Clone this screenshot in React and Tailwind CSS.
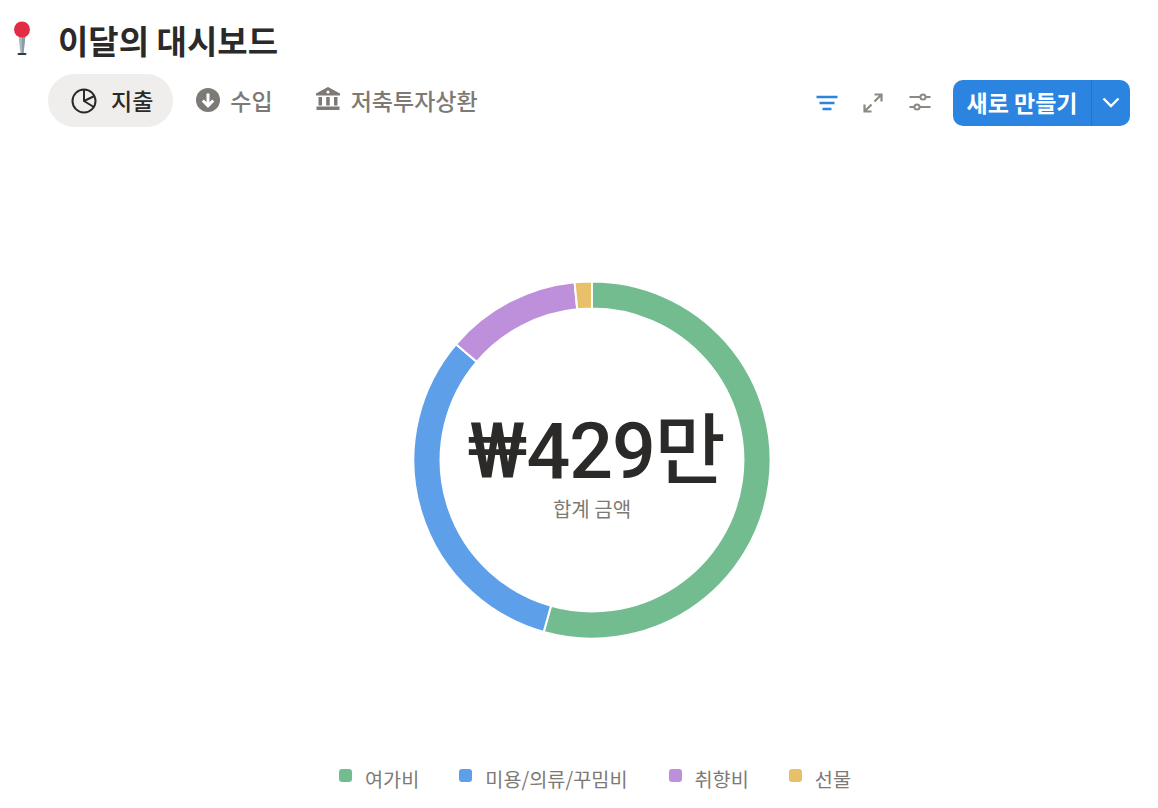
import React from 'react';

const font = { fontFamily: '"Noto Sans CJK KR", "Noto Sans", sans-serif' };
const totalFont = { fontFamily: 'Roboto, "Noto Sans CJK KR", sans-serif' };

const CX = 178;
const CY = 178;
const OUTER = 178.6;
const INNER = 151.4;

const segments = [
  { color: '#72bc90', from: 0, to: 195.7 },
  { color: '#5e9fe9', from: 195.7, to: 310.4 },
  { color: '#be8fdb', from: 310.4, to: 354.4 },
  { color: '#e8c069', from: 354.4, to: 360 },
];

const legend = [
  { label: '여가비', color: '#72bc90' },
  { label: '미용/의류/꾸밈비', color: '#5e9fe9' },
  { label: '취향비', color: '#be8fdb' },
  { label: '선물', color: '#e8c069' },
];

const point = (r, deg) => {
  const a = (deg * Math.PI) / 180;
  return `${(CX + r * Math.sin(a)).toFixed(2)} ${(CY - r * Math.cos(a)).toFixed(2)}`;
};

const arcPath = (from, to) => {
  const large = to - from > 180 ? 1 : 0;
  return `M${point(OUTER, from)} A${OUTER} ${OUTER} 0 ${large} 1 ${point(OUTER, to)} L${point(INNER, to)} A${INNER} ${INNER} 0 ${large} 0 ${point(INNER, from)} Z`;
};

const Pin = () => (
  <svg width="24" height="36" viewBox="0 0 24 36">
    <path d="M8.5 15 L15.5 15 L13.5 33.5 L10.5 33.5 Z" fill="#a9b6bf" />
    <path d="M12 15 L15.5 15 L13.5 33.5 L12 33.5 Z" fill="#8c9ba6" />
    <rect x="7.5" y="33" width="9" height="2" rx="1" fill="#33393d" />
    <circle cx="12" cy="9.5" r="8" fill="#e22b45" />
  </svg>
);

const PieIcon = () => (
  <svg width="26" height="26" viewBox="0 0 26 26" fill="none" stroke="#2b2a28" strokeWidth="2">
    <circle cx="13" cy="13" r="11.5" />
    <path d="M13 1.5 V13 L22.8 19" />
    <path d="M13 13 L23.5 8" />
  </svg>
);

const DownIcon = () => (
  <svg width="24" height="24" viewBox="0 0 24 24" className="mb-[2px]">
    <circle cx="12" cy="12" r="12" fill="#7d7a75" />
    <path d="M12 5.5 V17.5 M6.8 12.5 L12 17.8 L17.2 12.5" fill="none" stroke="#fff" strokeWidth="3" />
  </svg>
);

const BankIcon = () => (
  <svg width="26" height="26" viewBox="0 0 26 26" fill="#7d7a75" className="mb-[4px]">
    <path d="M13 1 L25 7.5 V9.5 H1 V7.5 Z" />
    <circle cx="13" cy="6" r="1.6" fill="#fff" />
    <rect x="3.5" y="11" width="3.5" height="8.5" />
    <rect x="11.2" y="11" width="3.5" height="8.5" />
    <rect x="19" y="11" width="3.5" height="8.5" />
    <rect x="1.5" y="20.5" width="23" height="3.5" />
  </svg>
);

const FilterIcon = () => (
  <svg width="22" height="16" viewBox="0 0 22 16" fill="none" stroke="#2a84e0" strokeWidth="2.4">
    <path d="M0.5 2 H21.5 M3.5 8 H18.5 M6.5 14 H15.5" />
  </svg>
);

const ExpandIcon = () => (
  <svg width="20" height="20" viewBox="0 0 20 20" fill="none" stroke="#8c8984" strokeWidth="2.2">
    <path d="M11.5 8.5 L18.5 1.5 M11.5 1.5 H18.5 V8.5 M8.5 11.5 L1.5 18.5 M1.5 11.5 V18.5 H8.5" />
  </svg>
);

const SlidersIcon = () => (
  <svg width="22" height="18" viewBox="0 0 22 18" fill="none" stroke="#8c8984" strokeWidth="2" className="mb-[1px]">
    <path d="M0.5 4 H11 M17 4 H21.5 M0.5 14 H5 M11 14 H21.5" />
    <circle cx="14" cy="4" r="2.6" />
    <circle cx="8" cy="14" r="2.6" />
  </svg>
);

const Tab = ({ icon, label, active, className }) => (
  <div
    className={`flex h-[53px] items-center rounded-full text-[23px] font-medium ${
      active ? 'bg-[#efeeec] text-[#2b2a28]' : 'text-[#7d7a75]'
    } ${className}`}
  >
    {icon}
    <span>{label}</span>
  </div>
);

export default function App() {
  return (
    <div className="h-[808px] w-[1158px] overflow-hidden bg-white" style={font}>
      <header className="flex h-[74px] items-start pl-[10px] pt-[20px]">
        <Pin />
        <h1 className="ml-[24px] mt-[-2px] text-[33px] font-bold leading-[44px] text-[#2b2a28]">
          이달의 대시보드
        </h1>
      </header>

      <nav className="flex h-[53px] items-center justify-between pl-[48px] pr-[28px]">
        <div className="flex items-center">
          <Tab active icon={<PieIcon />} label="지출" className="gap-[14px] pl-[23px] pr-[20px]" />
          <Tab icon={<DownIcon />} label="수입" className="ml-[23px] gap-[10px]" />
          <Tab icon={<BankIcon />} label="저축투자상환" className="ml-[42px] gap-[10px]" />
        </div>
        <div className="mt-[4px] flex items-center">
          <FilterIcon />
          <span className="ml-[25px]"><ExpandIcon /></span>
          <span className="ml-[26px]"><SlidersIcon /></span>
          <div className="ml-[22px] flex h-[46px] w-[177px] items-center rounded-[10px] bg-[#2a84e0] text-white">
            <span className="flex-1 text-center text-[23px] font-bold leading-none">새로 만들기</span>
            <span className="flex h-full w-[39px] items-center justify-center border-l border-[#2475c8]">
              <svg width="18" height="11" viewBox="0 0 18 11" fill="none" stroke="#fff" strokeWidth="2.4">
                <path d="M1.5 1.5 L9 9 L16.5 1.5" />
              </svg>
            </span>
          </div>
        </div>
      </nav>

      <main className="relative flex h-[614px] w-full flex-col items-center">
        <div className="relative ml-[26px] mt-[155px]">
          <svg width="356" height="356" viewBox="0 0 356 356" className="block overflow-visible">
            {segments.map((s) => (
              <path key={s.color} d={arcPath(s.from, s.to)} fill={s.color} stroke="#fff" strokeWidth="2" />
            ))}
          </svg>
          <div className="absolute inset-0 flex flex-col items-center pt-[127px]">
            <div className="ml-[8px] text-[77px] font-medium leading-[86px] tracking-[-1px] text-[#2b2a28]" style={totalFont}>₩429만</div>
            <div className="text-[20px] leading-[28px] text-[#7d7a75]">합계 금액</div>
          </div>
        </div>
        <div className="ml-[32px] mt-[127px] flex items-center">
          {legend.map((item, i) => (
            <div key={item.label} className={`flex items-center ${i === 0 ? '' : i === 2 ? 'ml-[41px]' : 'ml-[40px]'}`}>
              <span className="mb-[8px] h-[13px] w-[13px] rounded-[3px]" style={{ backgroundColor: item.color }} />
              <span className="ml-[13px] text-[19.7px] leading-[28px] text-[#7d7a75]">{item.label}</span>
            </div>
          ))}
        </div>
      </main>
    </div>
  );
}
